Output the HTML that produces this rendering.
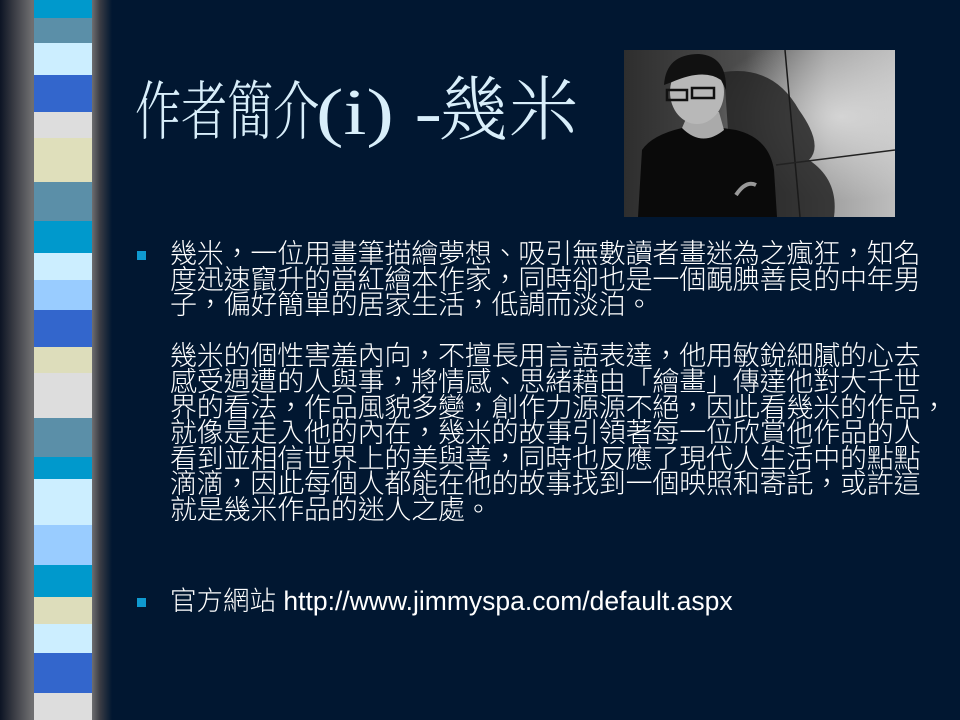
<!DOCTYPE html>
<html><head><meta charset="utf-8"><style>
html,body{margin:0;padding:0}
body{width:960px;height:720px;background:#011731;position:relative;overflow:hidden}
#left{position:absolute;left:0;top:0;width:112px;height:720px;background:linear-gradient(to right,#0c1424 0px,#3a3c44 14px,#6e6e70 32px,#6e6e70 92px,#3a3c44 100px,#011731 112px)}
.st{position:absolute;left:34px;width:58px}
.t{position:absolute;left:135px;top:72px;font-family:"Liberation Serif","Noto Serif CJK TC","Noto Serif CJK SC",serif;font-size:66px;color:#d8eefa;line-height:80px;white-space:nowrap;font-weight:300}
.t .n{display:inline-block;width:181px;transform:scaleX(0.72);transform-origin:left center;font-size:64px}
.t .p{display:inline-block;transform:scaleX(1.25);transform-origin:left center;margin-right:22px}
.t .huge{font-size:70px}
.b{position:absolute;left:170px;font-family:"Liberation Sans","Noto Sans CJK TC",sans-serif;font-size:27px;font-weight:300;color:#fff;line-height:25.6px;white-space:nowrap;letter-spacing:-0.2px}
.sq{position:absolute;width:9px;height:9px;background:#0f9ad0;left:137px}
</style></head><body>
<div id="left"></div>
<div class="st" style="top:0;height:18px;background:#0099cc"></div>
<div class="st" style="top:18px;height:25px;background:#5b8fa8"></div>
<div class="st" style="top:43px;height:32px;background:#cceeff"></div>
<div class="st" style="top:75px;height:37px;background:#3366cc"></div>
<div class="st" style="top:112px;height:26px;background:#dddddd"></div>
<div class="st" style="top:138px;height:44px;background:#dfdfbb"></div>
<div class="st" style="top:182px;height:39px;background:#5b8fa8"></div>
<div class="st" style="top:221px;height:32px;background:#0099cc"></div>
<div class="st" style="top:253px;height:27px;background:#cceeff"></div>
<div class="st" style="top:280px;height:30px;background:#99ccff"></div>
<div class="st" style="top:310px;height:37px;background:#3366cc"></div>
<div class="st" style="top:347px;height:26px;background:#ddddbb"></div>
<div class="st" style="top:373px;height:45px;background:#dddddd"></div>
<div class="st" style="top:418px;height:39px;background:#5b8fa8"></div>
<div class="st" style="top:457px;height:22px;background:#0099cc"></div>
<div class="st" style="top:479px;height:46px;background:#cceeff"></div>
<div class="st" style="top:525px;height:40px;background:#99ccff"></div>
<div class="st" style="top:565px;height:32px;background:#0099cc"></div>
<div class="st" style="top:597px;height:27px;background:#ddddbb"></div>
<div class="st" style="top:624px;height:29px;background:#cceeff"></div>
<div class="st" style="top:653px;height:40px;background:#3366cc"></div>
<div class="st" style="top:693px;height:27px;background:#dddddd"></div>

<div class="t"><span class="n">作者簡介</span><span class="p">(i) -</span><span class="huge">幾米</span></div>

<svg style="position:absolute;left:624px;top:50px" width="271" height="167" viewBox="0 0 271 167">
<defs><linearGradient id="g" x1="0" x2="1" y1="0" y2="0"><stop offset="0" stop-color="#2e2e2e"/><stop offset="0.45" stop-color="#4e4e4e"/><stop offset="0.75" stop-color="#a0a0a0"/><stop offset="1" stop-color="#bdbdbd"/></linearGradient>
<radialGradient id="r" cx="0.8" cy="0.4" r="0.5"><stop offset="0" stop-color="#e8e8e8" stop-opacity="0.7"/><stop offset="1" stop-color="#e8e8e8" stop-opacity="0"/></radialGradient></defs>
<rect width="271" height="167" fill="url(#g)"/>
<rect width="271" height="167" fill="url(#r)"/>
<path d="M100 22 Q150 15 175 60 Q200 95 185 110 Q215 130 210 167 L110 167 Z" fill="#252525" opacity="0.85"/>
<line x1="161" y1="0" x2="176" y2="167" stroke="#1a1a1a" stroke-width="1.5"/>
<line x1="152" y1="115" x2="271" y2="100" stroke="#222" stroke-width="1.5"/>
<path d="M14 167 L18 100 Q28 85 58 78 L72 74 L112 80 Q145 88 150 120 L153 167 Z" fill="#0a0a0a"/>
<path d="M58 78 Q78 98 100 80 L95 62 L65 62 Z" fill="#aaaaaa"/>
<ellipse cx="73" cy="42" rx="27" ry="32" fill="#b8b8b8"/>
<path d="M40 35 Q42 4 75 4 Q103 6 102 40 L97 30 Q80 18 48 32 Z" fill="#111"/>
<rect x="43" y="40" width="20" height="10" fill="none" stroke="#111" stroke-width="2.5"/>
<rect x="68" y="38" width="22" height="10" fill="none" stroke="#111" stroke-width="2.5"/>
<path d="M112 145 Q122 130 132 135" stroke="#999" stroke-width="4" fill="none"/>
</svg>

<div class="sq" style="top:251px"></div>
<div class="b" style="top:242px">幾米，一位用畫筆描繪夢想、吸引無數讀者畫迷為之瘋狂，知名<br>度迅速竄升的當紅繪本作家，同時卻也是一個靦腆善良的中年男<br>子，偏好簡單的居家生活，低調而淡泊。<br><br>幾米的個性害羞內向，不擅長用言語表達，他用敏銳細膩的心去<br>感受週遭的人與事，將情感、思緒藉由「繪畫」傳達他對大千世<br>界的看法，作品風貌多變，創作力源源不絕，因此看幾米的作品，<br>就像是走入他的內在，幾米的故事引領著每一位欣賞他作品的人<br>看到並相信世界上的美與善，同時也反應了現代人生活中的點點<br>滴滴，因此每個人都能在他的故事找到一個映照和寄託，或許這<br>就是幾米作品的迷人之處。</div>

<div class="sq" style="top:598px"></div>
<div class="b" style="top:589px;font-size:26.5px;letter-spacing:0;font-weight:300">官方網站 <span style="font-weight:400">http://www.jimmyspa.com/default.aspx</span></div>
</body></html>
